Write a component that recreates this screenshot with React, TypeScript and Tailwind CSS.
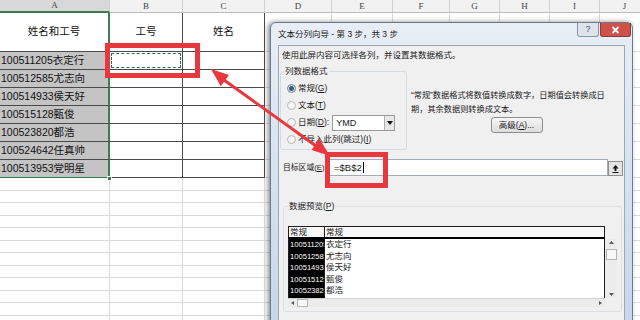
import React from "react";

const W = ["w-[110px]", "w-[73px]", "w-[82px]", "w-[67px]", "w-[61px]", "w-[57px]", "w-[50px]", "w-[50px]", "w-[50px]", "w-[50px]"];
const LETTERS = ["A", "B", "C", "D", "E", "F", "G", "H", "I", "J"];
const PEOPLE = ["100511205衣定行", "100512585尤志向", "100514933侯天好", "100515128甄俊", "100523820都浩", "100524642任真帅", "100513953党明星"];
const PREVIEW = [
    ["100511205", "衣定行"],
    ["100512585", "尤志向"],
    ["100514933", "侯天好"],
    ["100515128", "甄俊"],
    ["100523820", "都浩"],
];

function Cell({ i, kind, last, children }: { i: number; kind: "title" | "data" | "empty"; last?: boolean; children?: React.ReactNode }) {
    let cls = "border-r border-b border-[#dadada]";
    if (kind !== "empty" && i < 3) {
        cls = "border-r border-b border-[#4a4a4a]";
        if (i === 0) cls += " border-r-2 border-r-[#3d7d55]";
        if (i === 0 && kind === "data") cls += " bg-[#c4c4c4]";
        if (i === 0 && last) cls += " border-b-[#3d7d55]";
    }
    return <div className={`${W[i]} relative shrink-0 overflow-hidden whitespace-nowrap ${cls}`}>{children}</div>;
}

function Sheet() {
    return (
        <div className="flex flex-col">
            <div className="flex h-[13px]">
                {LETTERS.map((l, i) => (
                    <div
                        key={l}
                        className={`${W[i]} flex shrink-0 items-center justify-center border-r border-[#d0d0d0] font-['Liberation_Serif',serif] text-[9px] leading-none text-[#444] ${i === 0 ? "border-b-2 border-b-[#3d7d55] bg-[#d8d8d8]" : "border-b border-b-[#bdbdbd] bg-[#f2f2f2]"}`}
                    >
                        {l}
                    </div>
                ))}
            </div>
            <div className="flex h-[39px] text-[10.5px]">
                {LETTERS.map((l, i) => (
                    <Cell key={l} i={i} kind="title">
                        <div className="flex h-full items-center justify-center">{["姓名和工号", "工号", "姓名"][i]}</div>
                    </Cell>
                ))}
            </div>
            {PEOPLE.map((p, r) => (
                <div key={p} className="flex h-[18px] text-[10.5px] leading-[17px]">
                    {LETTERS.map((l, i) => (
                        <Cell key={l} i={i} kind="data" last={r === PEOPLE.length - 1}>
                            {i === 0 && <div className="pl-[1px]">{p}</div>}
                            {i === 1 && r === 0 && <div className="absolute inset-[1px] border-[1.5px] border-dashed border-[#2f7048]" />}
                        </Cell>
                    ))}
                </div>
            ))}
            {Array.from({ length: 12 }).map((_, r) => (
                <div key={r} className="flex h-[12.5px]">
                    {LETTERS.map((l, i) => (
                        <Cell key={l} i={i} kind="empty" />
                    ))}
                </div>
            ))}
        </div>
    );
}

function Radio({ on, children }: { on?: boolean; children: React.ReactNode }) {
    return (
        <div className="flex h-[17px] items-center gap-[2px]">
            <span className={`flex h-[9px] w-[9px] shrink-0 items-center justify-center rounded-full border ${on ? "border-[#6a86a2] bg-[#e2ebf4]" : "border-[#b8b8b8] bg-[#f6f6f6]"}`}>
                {on && <span className="h-[5px] w-[5px] rounded-full bg-[#3b5a7a]" />}
            </span>
            <span className="whitespace-nowrap">{children}</span>
        </div>
    );
}

function Dialog() {
    return (
        <div className="absolute left-[270px] top-[22px] flex h-[310px] w-[363px] flex-col rounded-t-[6px] border border-[#6b7b8e] bg-[#cfdcea] bg-linear-to-b from-[#e8eef5] to-[#c5d6ea] px-[7px] shadow-[-2px_0_5px_rgba(0,0,0,0.45)]">
            <div className="flex h-[22px] items-start justify-between">
                <div className="self-center whitespace-nowrap text-[8.5px] leading-[11px] text-[#1a1a1a]">文本分列向导 - 第 3 步，共 3 步</div>
                <div className="-mr-[6px] flex gap-[1px]">
                    <div className="flex h-[14px] w-[22px] items-center justify-center rounded-b-[3px] border border-t-0 border-[#8796a8] bg-[#dde4ec] text-[9px] leading-none text-[#4a5563]">?</div>
                    <div className="flex h-[14px] w-[31px] items-center justify-center rounded-b-[3px] border border-t-0 border-[#8a3a36] bg-[#cf5149]">
                        <svg width="9" height="8" viewBox="0 0 9 8">
                            <path d="M1.5 1 L7.5 7 M7.5 1 L1.5 7" stroke="white" strokeWidth="1.8" />
                        </svg>
                    </div>
                </div>
            </div>
            <div className="flex-1 border border-[#9aa9ba] bg-[#f0f0f0] text-[8.5px] leading-[11px] text-[#1a1a1a]">
                <div className="whitespace-nowrap pl-[3px] pt-[4px]">使用此屏内容可选择各列，并设置其数据格式。</div>
                <div className="mt-[5px] flex">
                    <fieldset className="ml-[1px] w-[127px] rounded-[3px] border border-[#d3dbe2] pb-[1px] pl-[6px] pt-[3px]">
                        <legend className="ml-[-3px] px-[1px]">列数据格式</legend>
                        <Radio on>
                            常规(<span className="underline">G</span>)
                        </Radio>
                        <Radio>
                            文本(<span className="underline">T</span>)
                        </Radio>
                        <div className="flex items-center">
                            <Radio>
                                日期(<span className="underline">D</span>):
                            </Radio>
                            <div className="ml-[3px] flex h-[16px] w-[63px] border border-[#9a9a9a] bg-white">
                                <div className="flex-1 pl-[3px] text-[9px] leading-[14px]">YMD</div>
                                <div className="flex w-[10px] items-center justify-center border-l border-[#b0b0b0] bg-[#e8e8e8]">
                                    <svg width="6" height="4" viewBox="0 0 6 4">
                                        <path d="M0 0 H6 L3 4 Z" fill="#111" />
                                    </svg>
                                </div>
                            </div>
                        </div>
                        <Radio>
                            不导入此列(跳过)(<span className="underline">I</span>)
                        </Radio>
                    </fieldset>
                    <div className="ml-[4px] flex w-[211px] flex-col pt-[23px]">
                        <div className="whitespace-nowrap text-[8.2px] leading-[14px]">
                            <div>“常规”数据格式将数值转换成数字，日期值会转换成日</div>
                            <div>期，其余数据则转换成文本。</div>
                        </div>
                        <div className="mx-auto flex h-[16px] w-[52px] items-center justify-center rounded-[3px] border border-[#8e8e8e] bg-[#e6e6e6] bg-linear-to-b from-[#f6f6f6] to-[#dddddd]">
                            高级(<span className="underline">A</span>)...
                        </div>
                    </div>
                </div>
                <div className="mt-[9px] flex h-[17px] items-center pr-[1px]">
                    <div className="w-[48px] whitespace-nowrap pl-[4px] text-[7.8px]">
                        目标区域(<span className="underline">E</span>):
                    </div>
                    <div className="flex h-[17px] flex-1 items-center border border-[#a3acb6] bg-white pl-[6px] text-[9.5px]">
                        =$B$2<span className="ml-[1px] h-[11px] w-px bg-black" />
                    </div>
                    <div className="flex h-[15px] w-[15px] items-center justify-center self-end border border-[#8e8e8e] bg-[#e4e4e4]">
                        <svg width="9" height="10" viewBox="0 0 9 10">
                            <path d="M4.5 1 L1.5 4.5 H3.6 V7 H5.4 V4.5 H7.5 Z" fill="#111" />
                            <path d="M1.5 8.5 H7.5" stroke="#111" strokeWidth="1" />
                        </svg>
                    </div>
                </div>
                <fieldset className="ml-[4px] mr-[2px] mt-[25px] rounded-[3px] border border-[#dcdfe3] pb-[4px] pl-[4px] pt-[14px]">
                    <legend className="px-[1px]">
                        数据预览(<span className="underline">P</span>)
                    </legend>
                    <div className="flex">
                        <div className="w-[317px]">
                            <div className="flex h-[13px] border-x border-b-2 border-t border-[#1e1e1e] border-b-black bg-[#f7f7f7]">
                                <div className="w-[36px] border-r border-[#1e1e1e] pl-[1px]">常规</div>
                                <div className="pl-[1px]">常规</div>
                            </div>
                            <div className="flex h-[59px] border-x border-[#1e1e1e] bg-white">
                                <div className="w-[36px] shrink-0 overflow-hidden border-r border-[#1e1e1e] bg-black text-white">
                                    {PREVIEW.map(([id]) => (
                                        <div key={id} className="h-[11.6px] overflow-hidden whitespace-nowrap pl-[1px] text-[7.6px] leading-[11.6px]">
                                            {id}
                                        </div>
                                    ))}
                                </div>
                                <div className="pl-[1px]">
                                    {PREVIEW.map(([id, name]) => (
                                        <div key={id} className="h-[11.6px] whitespace-nowrap text-[8.5px] leading-[11.6px]">
                                            {name}
                                        </div>
                                    ))}
                                </div>
                            </div>
                            <div className="flex h-[9px] items-center justify-between border-t border-[#d0d0d0] bg-[#ececec] px-[3px]">
                                <div className="flex items-center gap-[3px]">
                                    <svg width="3" height="4" viewBox="0 0 3 4">
                                        <path d="M3 0 V4 L0 2 Z" fill="#555" />
                                    </svg>
                                    <div className="h-[8px] w-[11px] border border-[#b5b5b5] bg-[#f8f8f8]" />
                                </div>
                                <svg width="3" height="4" viewBox="0 0 3 4">
                                    <path d="M0 0 V4 L3 2 Z" fill="#555" />
                                </svg>
                            </div>
                        </div>
                        <div className="mt-[13px] flex h-[59px] w-[12px] flex-col items-center bg-[#ececec] py-[2px]">
                            <svg width="5" height="3" viewBox="0 0 5 3">
                                <path d="M0 3 H5 L2.5 0 Z" fill="#555" />
                            </svg>
                            <div className="mt-[5px] h-[11px] w-[11px] border border-[#b5b5b5] bg-[#f8f8f8]" />
                            <div className="flex-1" />
                            <svg width="5" height="3" viewBox="0 0 5 3">
                                <path d="M0 0 H5 L2.5 3 Z" fill="#555" />
                            </svg>
                        </div>
                    </div>
                </fieldset>
            </div>
        </div>
    );
}

function Annotations() {
    return (
        <>
            <div className="absolute left-[105px] top-[43px] h-[35px] w-[95px] border-[5px] border-[#e8383d]" />
            <div className="absolute left-[325px] top-[152px] h-[36px] w-[63px] border-[5px] border-[#e8383d]" />
            <div className="absolute left-[107px] top-[176px] h-[5px] w-[5px] border border-white bg-[#3d7d55]" />
            <svg className="pointer-events-none absolute left-0 top-0" width="640" height="320" viewBox="0 0 640 320">
                <path d="M224 80 L316 146" stroke="#e8383d" strokeWidth="3" />
                <path d="M211 69 L220.8 86.2 L229 75 Z" fill="#e8383d" />
                <path d="M330 156 L311.6 150 L319.4 138.8 Z" fill="#e8383d" />
            </svg>
        </>
    );
}

export default function App() {
    return (
        <div className="relative h-[320px] w-[640px] overflow-hidden bg-white font-['Liberation_Sans','Noto_Sans_CJK_SC',sans-serif] text-[#111]">
            <Sheet />
            <Dialog />
            <Annotations />
        </div>
    );
}
